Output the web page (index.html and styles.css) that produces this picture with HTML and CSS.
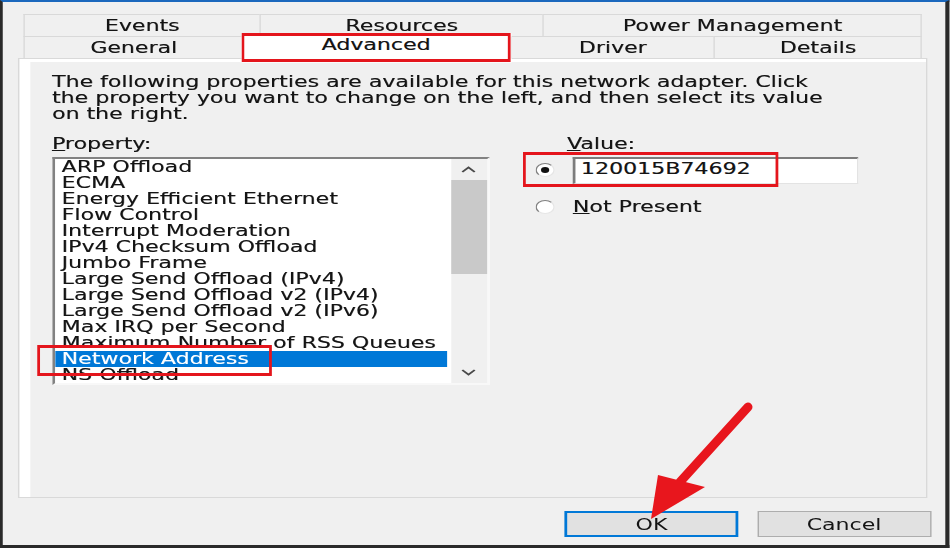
FILE: index.html
```html
<!DOCTYPE html>
<html>
<head>
<meta charset="utf-8">
<title>Network adapter properties</title>
<link rel="stylesheet" href="styles.css">
</head>
<body>
<div class="window">
  <div class="tabs">
    <div class="tab-row row-back">
      <div class="tab">Events</div>
      <div class="tab">Resources</div>
      <div class="tab">Power Management</div>
    </div>
    <div class="tab-row row-front">
      <div class="tab">General</div>
      <div class="tab selected">Advanced</div>
      <div class="tab">Driver</div>
      <div class="tab">Details</div>
    </div>
  </div>
  <div class="panel">
    <p class="desc">The following properties are available for this network adapter. Click<br>the property you want to change on the left, and then select its value<br>on the right.</p>
    <div class="columns">
      <div class="prop-col">
        <div class="label"><u>P</u>roperty:</div>
        <div class="listbox">
          <div class="items">
            <div class="item">ARP Offload</div>
            <div class="item">ECMA</div>
            <div class="item">Energy Efficient Ethernet</div>
            <div class="item">Flow Control</div>
            <div class="item">Interrupt Moderation</div>
            <div class="item">IPv4 Checksum Offload</div>
            <div class="item">Jumbo Frame</div>
            <div class="item">Large Send Offload (IPv4)</div>
            <div class="item">Large Send Offload v2 (IPv4)</div>
            <div class="item">Large Send Offload v2 (IPv6)</div>
            <div class="item">Max IRQ per Second</div>
            <div class="item">Maximum Number of RSS Queues</div>
            <div class="item sel">Network Address</div>
            <div class="item">NS Offload</div>
          </div>
          <div class="scrollbar">
            <div class="sb-btn"><svg width="11" height="7" viewBox="0 0 11 7"><path d="M1 6 L5.5 1.5 L10 6" fill="none" stroke="#4a4a4a" stroke-width="1.6"/></svg></div>
            <div class="thumb"></div>
            <div class="sb-track"></div>
            <div class="sb-btn"><svg width="11" height="7" viewBox="0 0 11 7"><path d="M1 1 L5.5 5.5 L10 1" fill="none" stroke="#4a4a4a" stroke-width="1.6"/></svg></div>
          </div>
          <div class="mark mark-item"></div>
        </div>
      </div>
      <div class="value-col">
        <div class="label value-label"><u>V</u>alue:</div>
        <div class="radio-row first">
          <span class="radio checked"></span>
          <div class="textbox">120015B74692</div>
          <div class="mark mark-value"></div>
        </div>
        <div class="radio-row second">
          <span class="radio"></span>
          <span class="radio-label"><u>N</u>ot Present</span>
        </div>
      </div>
    </div>
  </div>
  <div class="buttons">
    <button class="btn default">OK</button>
    <button class="btn cancel">Cancel</button>
  </div>
</div>
<svg class="arrow" width="120" height="130" viewBox="0 0 120 130">
  <line x1="108" y1="9" x2="40" y2="84" stroke="#e8161d" stroke-width="9" stroke-linecap="round"/>
  <polygon points="11,121 18,77 65,89" fill="#e8161d"/>
</svg>
</body>
</html>
```
FILE: styles.css
```css
body {
  margin: 0;
  width: 950px;
  height: 548px;
  overflow: hidden;
  background: #f0f0f0;
  font-family: "DejaVu Sans", "Liberation Sans", sans-serif;
  font-size: 16px;
  color: #141414;
}

/* The captured dialog is stretched horizontally; it is laid out at its
   native width and widened as one piece. */
.window {
  box-sizing: border-box;
  width: 688.4px;
  height: 548px;
  transform: scaleX(1.38);
  transform-origin: 0 0;
  border-top: 2px solid #1b68bd;
  border-left: 2px solid #2a2a2a;
  border-right: 3px solid #2a2a2a;
  border-bottom: 3px solid #2a2a2a;
  padding: 12px 0 0 11.04px;
  display: flex;
  flex-direction: column;
  text-shadow: 0.35px 0 0 rgba(20, 20, 20, 0.55);
}

.tabs {
  margin-left: 4.35px;
  width: 650.7px;
}

.tab-row {
  display: grid;
  grid-template-rows: 22px;
}

.row-back {
  grid-template-columns: 170.3px 205.8px 274.6px;
}

.row-front {
  grid-template-columns: 158px 194.2px 147.8px 150.7px;
}

.tab {
  box-sizing: border-box;
  border-top: 1px solid #d9d9d9;
  border-left: 1px solid #d9d9d9;
  text-align: center;
  line-height: 21px;
  white-space: nowrap;
}

.tab:last-child {
  border-right: 1px solid #d9d9d9;
}

.tab.selected {
  position: relative;
  z-index: 2;
  margin-top: -3px;
  height: 29px;
  border: 3px solid #e4151c;
  border-left-width: 2px;
  border-right-width: 2px;
  background: #fff;
  line-height: 17px;
}

.panel {
  box-sizing: border-box;
  width: 659.4px;
  height: 440px;
  flex: none;
  border: 1px solid #d9d9d9;
  background: #f0f0f0;
  box-shadow: inset 8px 3px 0 #fff;
  padding: 15px 0 0 23.6px;
}

.desc {
  margin: 0;
  line-height: 16px;
  white-space: nowrap;
}

.columns {
  display: flex;
  margin-top: 14px;
}

.prop-col {
  width: 317.4px;
  flex: none;
}

.label {
  line-height: 16px;
}

.listbox {
  position: relative;
  margin-top: 5px;
  display: flex;
  box-sizing: border-box;
  height: 228px;
  border-top: 2px solid #828282;
  border-left: 2px solid #828282;
  border-right: 2px solid #f8f8f8;
  border-bottom: 2px solid #f8f8f8;
  background: #fff;
}

.items {
  width: 287.6px;
  flex: none;
  overflow: hidden;
  background: #fff;
}

.item {
  height: 16px;
  line-height: 16px;
  padding-left: 5px;
  white-space: nowrap;
}

.item.sel {
  background: #0078d7;
  color: #fff;
  text-shadow: 0.35px 0 0 rgba(255, 255, 255, 0.5);
  margin-right: 2.9px;
}

.scrollbar {
  width: 25.4px;
  flex: none;
  background: #f0f0f0;
  display: flex;
  flex-direction: column;
}

.sb-btn {
  height: 21px;
  display: flex;
  align-items: center;
  justify-content: center;
}

.thumb {
  height: 94px;
  background: #c9c9c9;
}

.sb-track {
  flex: 1;
}

.value-col {
  margin-left: 32.6px;
}

.value-label {
  margin-left: 23.2px;
}

.radio-row {
  position: relative;
  display: flex;
  align-items: center;
}

.radio-row.first {
  margin-top: 5px;
  height: 27px;
}

.radio-row.second {
  margin-top: 15px;
  height: 16px;
}

.radio {
  box-sizing: border-box;
  width: 14px;
  height: 14px;
  flex: none;
  border-radius: 50%;
  border: 1px solid;
  border-color: #7f7f7f #e6e6e6 #e6e6e6 #7f7f7f;
  background: #fff;
  display: flex;
  align-items: center;
  justify-content: center;
}

.radio-row.first .radio {
  margin-top: -2px;
}

.radio.checked::after {
  content: "";
  width: 6px;
  height: 6px;
  border-radius: 50%;
  background: #111;
}

.textbox {
  box-sizing: border-box;
  margin-left: 13.5px;
  width: 206.5px;
  height: 27px;
  border-top: 2px solid #7d7d7d;
  border-left: 2px solid #7d7d7d;
  border-right: 1px solid #e3e3e3;
  border-bottom: 1px solid #e3e3e3;
  background: #fff;
  line-height: 20px;
  padding-left: 3.8px;
}

.radio-label {
  margin-left: 13.5px;
  line-height: 16px;
}

.mark {
  position: absolute;
  box-sizing: border-box;
  border: 3px solid #e4151c;
  border-left-width: 2px;
  border-right-width: 2px;
  pointer-events: none;
}

.mark-item {
  left: -12.2px;
  top: 186px;
  width: 169.6px;
  height: 31px;
}

.mark-value {
  left: -8.7px;
  top: -5px;
  width: 185.5px;
  height: 35px;
}

.buttons {
  display: flex;
  justify-content: flex-end;
  gap: 13.8px;
  margin-top: 13px;
  width: 661.6px;
}

.btn {
  box-sizing: border-box;
  width: 125.4px;
  height: 26px;
  padding: 1px 0 0;
  background: #e1e1e1;
  border: 1px solid #adadad;
  font: inherit;
  color: #141414;
  line-height: 22px;
}

.btn.default {
  border: 2px solid #0078d7;
}

.btn.cancel {
  width: 126px;
}

.arrow {
  position: absolute;
  left: 640px;
  top: 398px;
}
```
